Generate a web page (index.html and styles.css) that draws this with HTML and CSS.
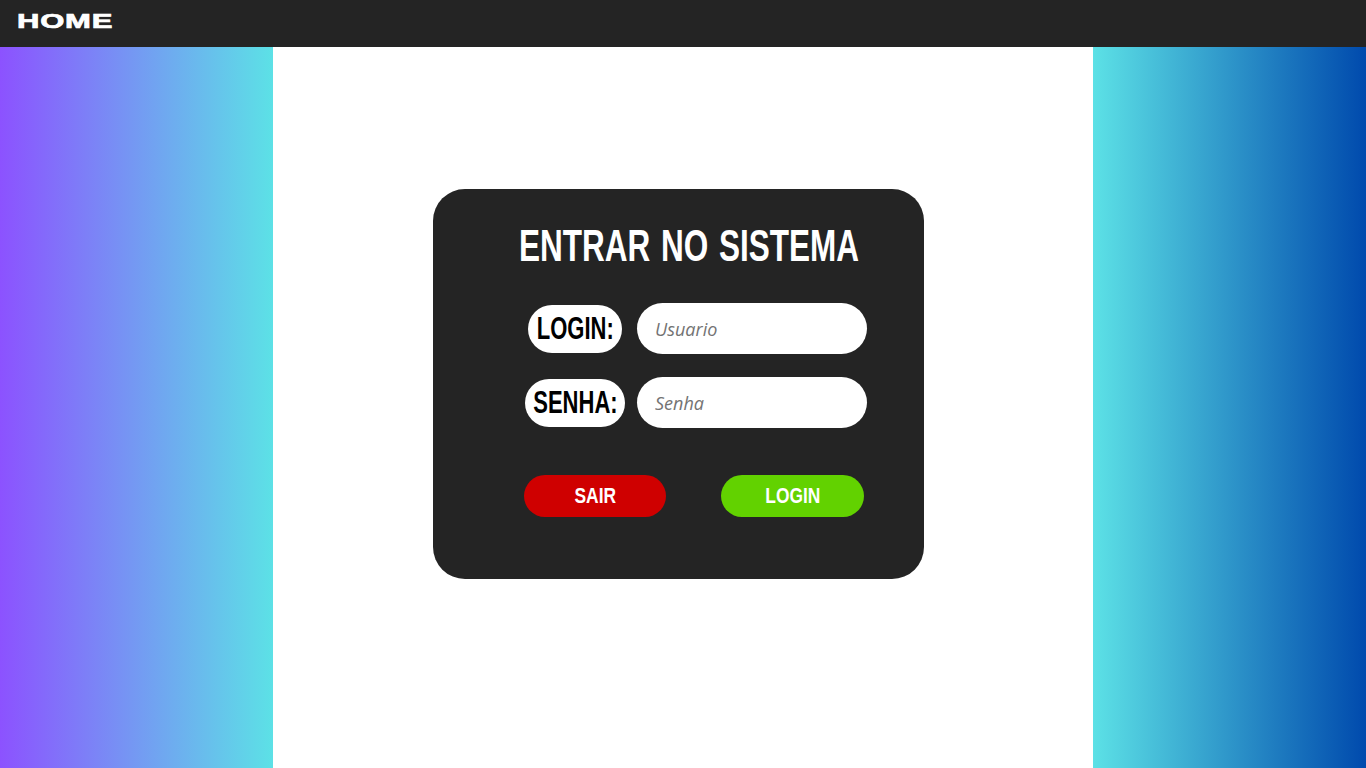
FILE: index.html
```html
<!DOCTYPE html>
<html lang="pt">
<head>
<meta charset="utf-8">
<title>Login</title>
<link rel="stylesheet" href="styles.css">
</head>
<body>
<header class="topbar">
  <span class="brand">HOME</span>
</header>
<main class="layout">
  <div class="side side-left"></div>
  <section class="center">
    <form class="card">
      <h1 class="title"><span class="squeeze">ENTRAR NO SISTEMA</span></h1>
      <div class="fields">
        <div class="row">
          <label class="tag tag-login" for="u"><span class="squeeze">LOGIN:</span></label>
          <input class="field" id="u" type="text" placeholder="Usuario">
        </div>
        <div class="row">
          <label class="tag tag-senha" for="p"><span class="squeeze">SENHA:</span></label>
          <input class="field" id="p" type="password" placeholder="Senha">
        </div>
      </div>
      <div class="actions">
        <button type="button" class="btn btn-exit"><span class="squeeze">SAIR</span></button>
        <button type="button" class="btn btn-go"><span class="squeeze">LOGIN</span></button>
      </div>
    </form>
  </section>
  <div class="side side-right"></div>
</main>
</body>
</html>
```
FILE: styles.css
```css
* { box-sizing: border-box; }
html, body { margin: 0; padding: 0; }
body { background: #fff; font-family: "Liberation Sans", Arial, sans-serif; overflow: hidden; }

.topbar {
  height: 47px;
  background: #242424;
  display: flex;
  align-items: center;
  padding-left: 17px;
}
.brand {
  display: inline-block;
  color: #fff;
  font-family: "Liberation Sans", Arial, sans-serif;
  font-weight: 700;
  font-size: 20px;
  letter-spacing: 0.5px;
  -webkit-text-stroke: 0.7px #fff;
  transform: scaleX(1.55);
  transform-origin: left center;
  margin-top: -5px;
}

.layout {
  display: grid;
  grid-template-columns: 273px 1fr 273px;
  height: 721px;
}
.side-left { background: linear-gradient(to right, #8c52ff, #5ce1e6); }
.side-right { background: linear-gradient(to right, #5ce1e6, #004aad); }
.center { background: #fff; padding-top: 142px; padding-left: 160px; }

.squeeze {
  display: inline-block;
  white-space: nowrap;
  transform-origin: center center;
}

.card {
  width: 491px;
  height: 390px;
  background: #242424;
  border-radius: 32px;
  display: flex;
  flex-direction: column;
  padding-top: 31px;
}
.title {
  margin: 0;
  padding-left: 13px;
  text-align: center;
  white-space: nowrap;
  color: #fff;
  font-family: "Liberation Sans", Arial, sans-serif;
  font-weight: 700;
  font-size: 45px;
  line-height: 52px;
  word-spacing: 3px;
}
.title .squeeze { transform: scaleX(0.7); }

.fields {
  display: flex;
  flex-direction: column;
  align-items: flex-end;
  gap: 23px;
  padding-right: 57px;
  margin-top: 31px;
}
.row { display: flex; align-items: center; gap: 12px; }
.tag {
  background: #fff;
  color: #000;
  height: 48px;
  border-radius: 24px;
  display: flex;
  align-items: center;
  justify-content: center;
  font-family: "Liberation Sans", Arial, sans-serif;
  font-weight: 700;
  font-size: 31px;
  overflow: visible;
}
.tag .squeeze { transform: scaleX(0.71); }
.tag-login { width: 94px; margin-right: 3px; }
.tag-senha { width: 100px; }
.field {
  width: 230px;
  height: 51px;
  border: none;
  border-radius: 26px;
  background: #fff;
  padding: 0 18px;
  font-family: "Open Sans", sans-serif;
  font-style: italic;
  font-size: 18px;
  outline: none;
}
.field::placeholder { color: #737373; font-style: italic; }

.actions {
  display: flex;
  gap: 55px;
  margin-top: 47px;
  padding-left: 91px;
}
.btn {
  width: 142px;
  height: 42px;
  border: none;
  border-radius: 21px;
  color: #fff;
  font-family: "Liberation Sans", Arial, sans-serif;
  font-weight: 700;
  font-size: 22px;
  padding: 0;
  display: flex;
  align-items: center;
  justify-content: center;
}
.btn .squeeze { transform: scaleX(0.79); }
.btn-exit { background: #cf0000; }
.btn-go { background: #62d200; width: 143px; }
```
